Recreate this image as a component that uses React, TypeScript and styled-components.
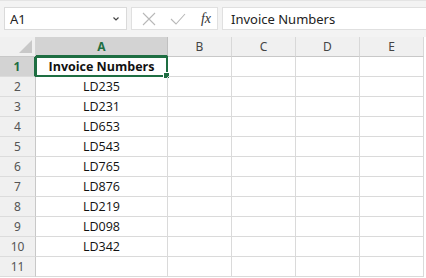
import React from "react";
import styled, { createGlobalStyle } from "styled-components";

const Global = createGlobalStyle`
  html, body { margin: 0; padding: 0; background: #ffffff; }
  body { width: 426px; height: 278px; overflow: hidden; font-family: "Noto Sans", "Open Sans", sans-serif; }
`;

const Page = styled.div`
  display: flex;
  flex-direction: column;
  width: 426px;
  height: 278px;
  overflow: hidden;
`;

const Toolbar = styled.div`
  display: flex;
  align-items: flex-start;
  height: 37px;
  box-sizing: border-box;
  padding: 6px 0 0 4px;
  background: #f3f3f3;
  border-top: 1px solid #e4e4e4;
`;

const NameBox = styled.div`
  display: flex;
  align-items: center;
  justify-content: space-between;
  width: 123px;
  height: 23px;
  box-sizing: border-box;
  padding: 0 6px 0 5px;
  background: #ffffff;
  border: 1px solid #dadada;
  font-size: 13px;
  color: #222;
`;

const Chevron = styled.span`
  font-size: 9px;
  color: #444;
`;

const FxBox = styled.div`
  display: flex;
  align-items: center;
  justify-content: space-between;
  margin-left: 4px;
  width: 87px;
  height: 23px;
  box-sizing: border-box;
  padding: 0 6px 0 10px;
  background: #ffffff;
  border: 1px solid #e0e0e0;
`;

const FxLabel = styled.span`
  font-family: "Liberation Serif", serif;
  font-style: italic;
  font-size: 14px;
  color: #333;
`;

const FormulaInput = styled.div`
  display: flex;
  align-items: center;
  margin-left: 4px;
  flex: 1;
  height: 23px;
  box-sizing: border-box;
  padding-left: 8px;
  background: #ffffff;
  border: 1px solid #e0e0e0;
  border-right: none;
  font-size: 13px;
  color: #222;
`;

const Grid = styled.div`
  display: grid;
  grid-template-columns: 36px 132px 64px 64px 64px 64px;
  grid-template-rows: 20px repeat(11, 20px);
  background: #ffffff;
`;

const Corner = styled.div`
  position: relative;
  background: #f0f0f0;
  border-right: 1px solid #d4d4d4;
  border-bottom: 1px solid #c8c8c8;
  box-sizing: border-box;
`;

const CornerTri = styled.div`
  position: absolute;
  right: 3px;
  bottom: 3px;
  width: 0;
  height: 0;
  border-left: 13px solid transparent;
  border-bottom: 13px solid #c8c8c8;
`;

const ColHead = styled.div<{ $sel?: boolean }>`
  display: flex;
  align-items: center;
  justify-content: center;
  box-sizing: border-box;
  background: ${(p) => (p.$sel ? "#d3d3d3" : "#f0f0f0")};
  color: ${(p) => (p.$sel ? "#1e6e42" : "#444")};
  font-weight: ${(p) => (p.$sel ? 700 : 400)};
  font-size: 12px;
  border-right: 1px solid ${(p) => (p.$sel ? "#c0c0c0" : "#d8d8d8")};
  border-bottom: ${(p) => (p.$sel ? "2px solid #1e6e42" : "1px solid #c8c8c8")};
`;

const RowHead = styled.div<{ $sel?: boolean }>`
  display: flex;
  align-items: center;
  justify-content: center;
  box-sizing: border-box;
  background: ${(p) => (p.$sel ? "#d3d3d3" : "#f0f0f0")};
  color: ${(p) => (p.$sel ? "#1e6e42" : "#555")};
  font-weight: ${(p) => (p.$sel ? 700 : 400)};
  font-size: 12px;
  border-right: ${(p) => (p.$sel ? "2px solid #1e6e42" : "1px solid #c8c8c8")};
  border-bottom: 1px solid #dcdcdc;
`;

const Cell = styled.div<{ $bold?: boolean; $center?: boolean }>`
  position: relative;
  display: flex;
  align-items: center;
  justify-content: ${(p) => (p.$center ? "center" : "flex-start")};
  box-sizing: border-box;
  border-right: 1px solid #dadada;
  border-bottom: 1px solid #dadada;
  font-family: "Open Sans", "Liberation Sans", sans-serif;
  font-size: 12.5px;
  font-weight: ${(p) => (p.$bold ? 700 : 400)};
  color: #111;
`;

const Selection = styled.div`
  position: absolute;
  left: -1px;
  top: -1px;
  right: -1px;
  bottom: -1px;
  border: 2px solid #1e6e42;
  pointer-events: none;
`;

const Handle = styled.div`
  position: absolute;
  right: -4px;
  bottom: -4px;
  width: 5px;
  height: 5px;
  background: #1e6e42;
  border: 1px solid #ffffff;
`;

const cols = ["A", "B", "C", "D", "E"];
const values = [
  "Invoice Numbers",
  "LD235",
  "LD231",
  "LD653",
  "LD543",
  "LD765",
  "LD876",
  "LD219",
  "LD098",
  "LD342",
  "",
];

export default function App() {
  return (
    <Page>
      <Global />
      <Toolbar>
        <NameBox>
          <span>A1</span>
          <Chevron>
            <svg width="8" height="6" viewBox="0 0 8 6">
              <path d="M1.5 1.5 L4 4 L6.5 1.5" fill="none" stroke="#444" strokeWidth="1.2" />
            </svg>
          </Chevron>
        </NameBox>
        <FxBox>
          <svg width="14" height="14" viewBox="0 0 14 14">
            <path d="M1 1 L13 13 M13 1 L1 13" stroke="#b8b8b8" strokeWidth="1.1" fill="none" />
          </svg>
          <svg width="16" height="14" viewBox="0 0 16 14">
            <path d="M1 7 L6 12 L15 2" stroke="#b8b8b8" strokeWidth="1.1" fill="none" />
          </svg>
          <FxLabel>fx</FxLabel>
        </FxBox>
        <FormulaInput>Invoice Numbers</FormulaInput>
      </Toolbar>
      <Grid>
        <Corner>
          <CornerTri />
        </Corner>
        {cols.map((c) => (
          <ColHead key={c} $sel={c === "A"}>
            {c}
          </ColHead>
        ))}
        {values.map((v, i) => (
          <React.Fragment key={i}>
            <RowHead $sel={i === 0}>{i + 1}</RowHead>
            <Cell $center $bold={i === 0}>
              {v}
              {i === 0 && (
                <Selection>
                  <Handle />
                </Selection>
              )}
            </Cell>
            <Cell />
            <Cell />
            <Cell />
            <Cell />
          </React.Fragment>
        ))}
      </Grid>
    </Page>
  );
}
